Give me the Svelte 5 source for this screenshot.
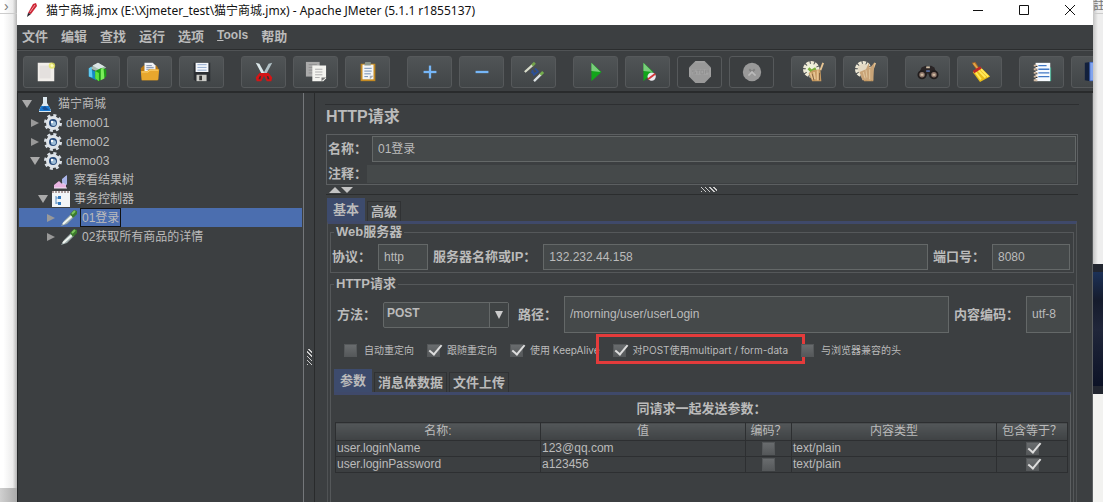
<script lang="ts">
  interface TreeNode {
    label: string;
    icon: string;
    level: number;
    arrow?: 'open' | 'closed';
  }

  const menus = ['文件', '编辑', '查找', '运行', '选项', 'Tools', '帮助'];

  const toolGroups = [
    ['new', 'templates', 'open', 'save'],
    ['cut', 'copy', 'paste'],
    ['expand', 'collapse', 'toggle'],
    ['start', 'start-no-pauses', 'stop', 'shutdown'],
    ['clear', 'clear-all'],
    ['search', 'search-reset'],
    ['function-helper', 'help'],
  ];

  const disabledTools = ['stop', 'shutdown'];

  const nodes: TreeNode[] = [
    { label: '猫宁商城', icon: 'flask', level: 0, arrow: 'open' },
    { label: 'demo01', icon: 'gear', level: 1, arrow: 'closed' },
    { label: 'demo02', icon: 'gear', level: 1, arrow: 'closed' },
    { label: 'demo03', icon: 'gear', level: 1, arrow: 'open' },
    { label: '察看结果树', icon: 'listener', level: 2 },
    { label: '事务控制器', icon: 'controller', level: 2, arrow: 'open' },
    { label: '01登录', icon: 'sampler', level: 3, arrow: 'closed' },
    { label: '02获取所有商品的详情', icon: 'sampler', level: 3, arrow: 'closed' },
  ];

  let selected = $state('01登录');

  let options = $state([
    { label: '自动重定向', checked: false, marked: false },
    { label: '跟随重定向', checked: true, marked: false },
    { label: '使用 KeepAlive', checked: true, marked: false },
    { label: '对POST使用multipart / form-data', checked: true, marked: true },
    { label: '与浏览器兼容的头', checked: false, marked: false },
  ]);

  let params = $state([
    { name: 'user.loginName', value: '123@qq.com', encode: false, type: 'text/plain', equals: true },
    { name: 'user.loginPassword', value: 'a123456', encode: false, type: 'text/plain', equals: true },
  ]);
</script>

{#snippet toolIcon(name: string)}
  <svg class="tool-icon" viewBox="0 0 24 24" aria-hidden="true">
    {#if name === 'new'}
      <path d="M3 2h15l3 3v17H3z" fill="#f1eeea" />
      <path d="M5 5h12v14H5z" fill="#e4e0de" />
      <circle cx="18.500" cy="5" r="3.500" fill="#e9e75e" opacity=".8" />
      <circle cx="18.500" cy="5" r="1.500" fill="#fffcc0" />
    {:else if name === 'templates'}
      <path d="M3 8l9-6 9 5-8 5z" fill="#a9bdb3" />
      <path d="M6 5l6-3 7 4-6 3z" fill="#dbe5e5" />
      <path d="M2 8l8 4v9l-8-4z" fill="#158ac2" />
      <path d="M2 8l3-2 1 12-4-1z" fill="#5fc9ef" />
      <path d="M9 11l6-3 6 1v8l-8 5-4-3z" fill="#1d9d17" />
      <path d="M9 11l4 2v9l-4-3z" fill="#5de23f" />
      <path d="M15 9l3-2 1 12-4 2z" fill="#7bee5b" />
    {:else if name === 'open'}
      <path d="M2 8l3-3h14l2 3v13H3z" fill="#b87712" />
      <path d="M6 2h9l3 3v9H6z" fill="#f1f3f7" />
      <path d="M8 5h6M8 7h8M8 9h8" stroke="#7d8da8" />
      <path d="M2 11h7l2-2h11l-1 11-1 1H3z" fill="#e8a72d" />
      <path d="M3 12h7l2-2h9" stroke="#ffd77c" fill="none" />
    {:else if name === 'save'}
      <path d="M3 2h18v20H5l-2-2z" fill="#2b2e33" />
      <path d="M5 2h14v10H5z" fill="#f4f7fb" />
      <path d="M7 4h10M7 7h10M7 10h10" stroke="#8ba4ca" />
      <path d="M6 15h11v7H6z" fill="#cbcbc7" />
      <path d="M9 16h3v5H9z" fill="#353535" />
    {:else if name === 'cut'}
      <path d="M3 2l4 1 6 11-3 1z" fill="#dce8ea" />
      <path d="M21 2l-4 1-6 11 3 1z" fill="#b1c1c6" />
      <path d="M12 13l-5 0-4 5 1 4h5l3-6 3 6h5l1-4-4-5z" fill="#d41516" />
      <path d="M6 20l1-3 2-1-1 4zM18 20l-1-3-2-1 1 4z" fill="#402d30" />
    {:else if name === 'copy'}
      <path d="M1 1h15v16H1z" fill="#aaa" />
      <path d="M4 4h9M4 7h6M4 10h5M4 13h5" stroke="#8d8d8d" />
      <path d="M8 5h15v14l-3 3H8z" fill="#f3f3ef" />
      <path d="M11 9h8M11 12h8M11 15h8M11 18h5" stroke="#aaa" />
      <path d="M18 22v-4h5z" fill="#777" />
    {:else if name === 'paste'}
      <path d="M4 3h16v19H4z" fill="#c48a22" />
      <path d="M6 4h12v16H6z" fill="#f4f6f7" />
      <path d="M9 1h6v4H8z" fill="#8c968b" />
      <path d="M8 8h8M8 11h8M8 14h7M8 17h4" stroke="#6986ad" />
      <path d="M14 20v-4h4z" fill="#9fa9b8" />
    {:else if name === 'expand' || name === 'collapse'}
      <path d="M5 12h14" stroke="#76b6f7" stroke-width="2.500" />
      {#if name === 'expand'}
        <path d="M12 5v14" stroke="#76b6f7" stroke-width="2.500" />
      {/if}
    {:else if name === 'toggle'}
      <path d="M2 12l9-8" stroke="#d9ddcb" stroke-width="2.500" />
      <path d="M10 5l3-3" stroke="#73a34a" stroke-width="3" />
      <path d="M12 22l8-8" stroke="#dce2e4" stroke-width="2.500" />
      <path d="M19 15l3-3" stroke="#74ad4e" stroke-width="3" />
      <path d="M10 10l2 5 5-4M13 8l3 3M9 12l4 2" stroke="#2c4f96" stroke-width="2" fill="none" />
    {:else if name === 'start' || name === 'start-no-pauses'}
      <path d="M7 2l11 10L7 22z" fill="#12a51b" />
      <path d="M7 2l10 10-10-1z" fill="#79cd7b" />
      {#if name === 'start-no-pauses'}
        <circle cx="16" cy="17" r="4.500" fill="#ecebf0" />
        <path d="M12 20l8-6" stroke="#d33839" stroke-width="2" />
      {/if}
    {:else if name === 'stop'}
      <path d="M7 0h10l7 7v10l-7 7H7l-7-7V7z" fill="#999" />
      <path d="M7 1h10M1 8v8M23 8v8" stroke="#a8a8a8" />
      <path d="M3 9h18v6H3z" fill="#a3a3a3" />
      <path d="M7 10H4v2h3v2H4M8 10h4M10 10v4M13 10h3v4h-3zM18 14v-4h3v2h-3" stroke="#8f8f8f" fill="none" />
    {:else if name === 'shutdown'}
      <circle cx="12" cy="12" r="10" fill="#999" />
      <path d="M8 16l4-4 4 4M9 9l6 6M15 9l-3 3" stroke="#808080" stroke-width="2" fill="none" />
      <path d="M8 16l4-4 4 4" stroke="#bbb" stroke-width="2" fill="none" />
    {:else if name === 'clear' || name === 'clear-all'}
      <circle cx="9" cy="9" r="7" fill="none" stroke="#ede8d5" stroke-width="4" stroke-dasharray="3.500 1" />
      <circle cx="9" cy="9" r="6" fill={name === 'clear' ? '#eef0dc' : '#e4dac5'} />
      {#if name === 'clear'}
        <path d="M6 8l3 3 5-3" stroke="#7cae3c" stroke-width="3" fill="none" />
      {/if}
      <path d="M6 13l5-3 8-1 1 13H10z" fill="#c69a61" />
      <path d="M19 10l3-8M12 12l1 8M16 10v11M8 13l3 7" stroke="#e6c493" stroke-width="2" />
      <path d="M18 13v8M10 14l2 7" stroke="#80603d" />
      {#if name === 'clear-all'}
        <path d="M5 12l7-3 3-7 1 6 5-6-1 19H8z" fill="#c9a478" />
        <path d="M12 10l1 8M16 9v11M9 12l2 7" stroke="#e3c9a2" />
      {/if}
    {:else if name === 'search'}
      <path d="M5 7l5-2 2 3 3-3 4 2 3 9-8 2-2-5-3 5-8-2z" fill="#2a2526" />
      <circle cx="5.500" cy="15" r="4" fill="#8c7469" stroke="#211d1d" stroke-width="2" />
      <circle cx="18.500" cy="15" r="4" fill="#8c7469" stroke="#211d1d" stroke-width="2" />
      <path d="M4 15h3M17 15h3M10 7h4" stroke="#d0bda4" stroke-width="2" />
      <path d="M10 11h4" stroke="#526595" stroke-width="2" />
    {:else if name === 'search-reset'}
      <path d="M3 2l4-1 5 8-3 2z" fill="#aa6926" />
      <path d="M4 3l2-1 5 7-1 1z" fill="#e1a747" />
      <path d="M4 12l9-5 10 10-11 6z" fill="#e9bd19" />
      <path d="M7 12l6 8M10 10l8 8M13 9l8 8" stroke="#ffe95b" stroke-width="2" />
      <path d="M5 12l8-5" stroke="#bd2829" stroke-width="3" />
    {:else if name === 'function-helper'}
      <path d="M19 7h3v15h-3z" fill="#2d9f7e" />
      <path d="M5 2h16v20H5z" fill="#f7fbff" />
      <path d="M8 5h9M8 9h12M8 13h12M8 17h12" stroke="#4178c5" stroke-width="1.500" />
      <path d="M3 5h4M3 9h4M3 13h4M3 17h4M3 21h4" stroke="#d3bca5" stroke-width="2" />
      <path d="M5 6h2M5 10h2M5 14h2M5 18h2" stroke="#222" />
    {:else if name === 'help'}
      <path d="M2 2l6-1v21l-6-1z" fill="#12203c" />
      <path d="M7 1h14v21H7z" fill="#4a70c9" />
      <path d="M8 2h3v19H8z" fill="#83a5ee" />
    {/if}
  </svg>
{/snippet}

{#snippet treeIcon(name: string)}
  <svg class="tree-icon" viewBox="0 0 18 18" aria-hidden="true">
    {#if name === 'flask'}
      <path d="M7 2h4v6l4 7v2H3v-2l4-7z" fill="#dce8ef" />
      <path d="M5 11h8l2 5H3z" fill="#1978ce" />
      <path d="M6 13l3-2 4 4H8z" fill="#154f97" />
    {:else if name === 'gear'}
      <circle cx="9" cy="9" r="7.500" fill="none" stroke="#d9dfe5" stroke-width="3" stroke-dasharray="3 2.900" />
      <circle cx="9" cy="9" r="7" fill="#dfe4e9" />
      <circle cx="9" cy="9" r="4" fill="#294c7d" />
      <circle cx="9.500" cy="9.500" r="2.500" fill="#9dbdd8" />
      <circle cx="8" cy="8" r="1.200" fill="#fff" />
    {:else if name === 'listener'}
      <path d="M3 17v-3l4-3 3 2 1-5 3-3v12z" fill="#d9cdf2" />
      <path d="M2 17v-3l5-4 3 3 4 1v3z" fill="#e9b4e2" />
      <path d="M10 8l5-4v10l-5-3z" fill="#a9b4e8" />
      <path d="M2 17h13" stroke="#f4e9f8" />
    {:else if name === 'controller'}
      <path d="M0 1h18v16H0z" fill="#f2f5f7" />
      <path d="M0 2h18" stroke="#ac9e9d" stroke-width="2" stroke-dasharray="2 1" />
      <path d="M4 6v8M4 8h3M4 13h3" stroke="#578dc1" />
      <path d="M6 6h3v3H6zM6 12h3v3H6z" fill="#3378bc" />
    {:else if name === 'sampler'}
      <path d="M1 17l3-5 7-7 3 3-7 7z" fill="#9cabab" />
      <path d="M3 15l9-8" stroke="#f1f6f1" stroke-width="2" />
      <path d="M10 5l4-4 3 1v3l-4 4z" fill="#3b7b2d" />
      <path d="M12 5l3-3" stroke="#7dc45d" stroke-width="2" />
    {/if}
  </svg>
{/snippet}

<div class="desktop">
  <aside class="behind behind-left">
    <div class="behind-top">›</div>
    <div class="behind-foot"></div>
  </aside>

  <div class="window">
    <header class="titlebar">
      <svg class="app-icon" viewBox="0 0 16 16" aria-hidden="true">
        <path d="M4 11l5-9 3-1 1 3-6 8z" fill="#cd2535" />
        <path d="M6 10l5-7" stroke="#f39aa0" />
        <path d="M4 11l3 1-4 3z" fill="#252029" />
      </svg>
      <span class="window-title">猫宁商城.jmx (E:\Xjmeter_test\猫宁商城.jmx) - Apache JMeter (5.1.1 r1855137)</span>
      <div class="window-buttons">
        <button type="button" aria-label="Minimize">
          <svg viewBox="0 0 12 12"><path d="M1 6.500h10" /></svg>
        </button>
        <button type="button" aria-label="Maximize">
          <svg viewBox="0 0 12 12"><path d="M1.500 1.500h9v9h-9z" /></svg>
        </button>
        <button type="button" aria-label="Close">
          <svg viewBox="0 0 12 12"><path d="M1 1l10 10M11 1L1 11" /></svg>
        </button>
      </div>
    </header>

    <nav class="menubar">
      {#each menus as menu (menu)}
        <button type="button" class:latin={menu === 'Tools'}>
          {#if menu === 'Tools'}<u>T</u>ools{:else}{menu}{/if}
        </button>
      {/each}
    </nav>

    <div class="toolbar">
      {#each toolGroups as group, i (i)}
        <div class="tool-group">
          {#each group as tool (tool)}
            <button type="button" aria-label={tool} disabled={disabledTools.includes(tool)}>
              {@render toolIcon(tool)}
            </button>
          {/each}
        </div>
      {/each}
    </div>

    <div class="workspace">
      <div class="tree">
        {#each nodes as node (node.label)}
          <button
            type="button"
            class="node level-{node.level}"
            class:selected={selected === node.label}
            onclick={() => (selected = node.label)}
          >
            <span class="arrow {node.arrow ?? ''}"></span>
            {@render treeIcon(node.icon)}
            <span class="node-label">{node.label}</span>
          </button>
        {/each}
      </div>

      <div class="divider"><span class="grip grip-vertical"></span></div>

      <main class="editor">
        <h1>HTTP请求</h1>

        <div class="identity">
          <label for="name">名称：</label>
          <input id="name" value="01登录" />
          <label for="comment">注释：</label>
          <input id="comment" class="flat" value="" />
        </div>

        <div class="splitter">
          <span class="up"></span><span class="down"></span>
          <span class="grip grip-horizontal"></span>
        </div>

        <div class="tabs">
          <button type="button" class="active">基本</button>
          <button type="button">高级</button>
        </div>

        <section class="basic">
          <fieldset>
            <legend>Web服务器</legend>
            <div class="row">
              <label for="protocol">协议：</label>
              <input id="protocol" class="short" value="http" />
              <label for="server">服务器名称或IP：</label>
              <input id="server" class="grow" value="132.232.44.158" />
              <label for="port">端口号：</label>
              <input id="port" class="port" value="8080" />
            </div>
          </fieldset>

          <fieldset class="request">
            <legend>HTTP请求</legend>
            <div class="row request-row">
              <label for="method">方法：</label>
              <div class="select">
                <select id="method">
                  <option>POST</option>
                  <option>GET</option>
                </select>
                <span class="caret"></span>
              </div>
              <label for="path">路径：</label>
              <input id="path" class="grow tall" value="/morning/user/userLogin" />
              <label for="encoding">内容编码：</label>
              <input id="encoding" class="encoding tall" value="utf-8" />
            </div>

            <div class="options">
              {#each options as option (option.label)}
                <label class:marked={option.marked}>
                  <input type="checkbox" bind:checked={option.checked} />
                  {option.label}
                </label>
              {/each}
            </div>

            <div class="tabs param-tabs">
              <button type="button" class="active">参数</button>
              <button type="button">消息体数据</button>
              <button type="button">文件上传</button>
            </div>

            <div class="params">
              <h2>同请求一起发送参数：</h2>
              <table>
                <colgroup>
                  <col />
                  <col />
                  <col class="col-encode" />
                  <col />
                  <col class="col-equals" />
                </colgroup>
                <thead>
                  <tr>
                    <th>名称:</th>
                    <th>值</th>
                    <th>编码？</th>
                    <th>内容类型</th>
                    <th>包含等于？</th>
                  </tr>
                </thead>
                <tbody>
                  {#each params as param (param.name)}
                    <tr>
                      <td>{param.name}</td>
                      <td>{param.value}</td>
                      <td class="tick"><input type="checkbox" aria-label="编码" bind:checked={param.encode} /></td>
                      <td>{param.type}</td>
                      <td class="tick"><input type="checkbox" aria-label="包含等于" bind:checked={param.equals} /></td>
                    </tr>
                  {/each}
                </tbody>
              </table>
            </div>
          </fieldset>
        </section>
      </main>
    </div>
  </div>

  <aside class="behind behind-right">
    <div class="behind-top">註</div>
    <div class="wallpaper"></div>
    <div class="behind-rest"></div>
  </aside>
</div>

<style>
  :global(body) {
    margin: 0;
  }

  .desktop {
    display: flex;
    min-height: 100vh;
    overflow: hidden;
    background: #fff;
    font-family: 'Liberation Sans', 'Noto Sans CJK SC', sans-serif;
    font-size: 12px;
    color: #bbb;
  }

  .desktop * {
    box-sizing: border-box;
  }

  button,
  input,
  select {
    font: inherit;
    color: inherit;
    margin: 0;
  }

  button {
    border: 0;
    padding: 0;
    background: none;
  }

  .behind {
    display: flex;
    flex-direction: column;
    flex-shrink: 0;
    overflow: hidden;
  }

  .behind-left {
    width: 17px;
    background: linear-gradient(to right, #fff 20%, #ececec 75%, #b5b5b5);
  }

  .behind-top {
    height: 14px;
    border-bottom: 1px solid #ccc;
    line-height: 12px;
    color: #777;
  }

  .behind-left .behind-top {
    padding-left: 4px;
    font-size: 14px;
  }

  .behind-foot {
    height: 17px;
    margin-top: auto;
    background: linear-gradient(to right, #d0d0d0, #aaa);
  }

  .behind-right {
    width: 10px;
    background: linear-gradient(to right, #c4c4c4, #eee 50%);
  }

  .wallpaper {
    height: 130px;
    margin-top: 250px;
    border: solid #222630;
    border-width: 8px 0;
    background: linear-gradient(#1c3157, #151b2c 25%, #20263a 50%, #0c1226);
  }

  .behind-rest {
    flex: 1;
    background: #f2f2f0;
  }

  .window {
    display: flex;
    flex-direction: column;
    flex: 1;
    min-width: 0;
    background: #3c3f41;
  }

  .titlebar {
    display: flex;
    align-items: center;
    height: 25px;
    padding: 0 0 6px 7px;
    background: #fff;
    color: #111;
  }

  .app-icon {
    width: 16px;
    height: 16px;
    margin-right: 6px;
  }

  .window-title {
    flex: 1;
    font-family: 'Noto Sans', 'Noto Sans CJK SC', sans-serif;
    white-space: nowrap;
  }

  .window-buttons {
    display: flex;
  }

  .window-buttons button {
    display: grid;
    place-items: center;
    width: 46px;
    height: 18px;
  }

  .window-buttons svg {
    width: 12px;
    height: 12px;
    fill: none;
    stroke: #111;
  }

  .menubar {
    display: flex;
    gap: 13px;
    height: 25px;
    padding: 0 5px 4px;
    border-bottom: 1px solid #2b2d2e;
    font-size: 13px;
    font-weight: 700;
  }

  .menubar .latin {
    font-size: 12px;
  }

  .toolbar {
    display: flex;
    gap: 17px;
    height: 43px;
    padding: 5px 6px;
    border-top: 1px solid #505355;
    border-bottom: 2px solid #292b2c;
    overflow: hidden;
  }

  .tool-group {
    display: flex;
    flex-shrink: 0;
    gap: 7px;
  }

  .tool-group button {
    display: grid;
    place-items: center;
    width: 45px;
    height: 32px;
    border: 1px solid #56595b;
    border-radius: 3px;
    background: linear-gradient(#505456, #414547);
  }

  .tool-group button:disabled {
    background: #3b3e40;
  }

  .tool-icon {
    width: 22px;
    height: 22px;
  }

  .workspace {
    display: flex;
    flex: 1;
  }

  .tree {
    width: 287px;
    flex-shrink: 0;
    padding: 1px 1px 0;
    border-left: 1px solid #25282a;
    border-right: 1px solid #74777a;
  }

  .node {
    display: flex;
    align-items: center;
    width: 100%;
    height: 19px;
    line-height: 17px;
    white-space: nowrap;
  }

  .level-0 {
    padding-left: 2px;
  }

  .level-1 {
    padding-left: 10px;
  }

  .level-2 {
    padding-left: 18px;
  }

  .level-3 {
    padding-left: 26px;
  }

  .node.selected {
    background: #4b6eaf;
  }

  .arrow {
    display: grid;
    place-items: center;
    width: 12px;
    margin-right: 3px;
  }

  .arrow.open::before {
    content: '';
    border: solid transparent;
    border-width: 8px 5px 0;
    border-top-color: #aaa;
  }

  .arrow.closed::before {
    content: '';
    border: solid transparent;
    border-width: 4px 0 4px 8px;
    border-left-color: #999;
  }

  .tree-icon {
    width: 18px;
    height: 18px;
  }

  .node-label {
    height: 19px;
    margin-left: 2px;
    padding: 1px 1px 0;
    border: 1px solid transparent;
  }

  .selected .node-label {
    border-color: #111;
  }

  .divider {
    display: grid;
    place-items: center;
    width: 11px;
    flex-shrink: 0;
    padding-top: 115px;
    border-right: 1px solid #292b2c;
  }

  .grip {
    background: repeating-linear-gradient(45deg, #ccc 0 1px, #3c3f41 1px 3px);
  }

  .grip-vertical {
    width: 5px;
    height: 16px;
  }

  .grip-horizontal {
    width: 16px;
    height: 5px;
    margin: 0 auto;
  }

  .editor {
    flex: 1;
    min-width: 0;
    padding: 11px 13px 0 10px;
    border-right: 1px solid #5c5f61;
  }

  h1 {
    margin: 0 0 4px;
    padding: 0 1px;
    height: 26px;
    border-top: 1px solid #2d2f31;
    font-size: 16px;
    font-weight: 700;
    line-height: 23px;
  }

  .identity {
    display: grid;
    grid-template-columns: auto 1fr;
    align-items: center;
    row-gap: 3px;
    margin: 0 1px;
    padding: 1px;
    border: 1px solid #5c5f61;
  }

  label {
    font-size: 13px;
    font-weight: 700;
    line-height: 18px;
    white-space: nowrap;
  }

  input,
  select {
    height: 26px;
    min-width: 0;
    padding: 0 5px 1px;
    border: 1px solid #646868;
    border-radius: 0;
    outline: 0;
    background: #45494a;
  }

  .identity input {
    margin-left: 5px;
    padding-bottom: 3px;
  }

  .identity .flat {
    height: 18px;
    margin-left: 0;
    border: 0;
  }

  .splitter {
    display: flex;
    align-items: center;
    height: 10px;
    margin: 0 1px 3px;
    padding: 0 14px 0 3px;
    border-bottom: 1px solid #2b2d2e;
  }

  .up,
  .down {
    border: solid transparent;
    border-width: 0 6px 6px;
    border-bottom-color: #c4c4c4;
  }

  .down {
    border-width: 6px 6px 0;
    border-top-color: #c4c4c4;
  }

  .tabs {
    display: flex;
    align-items: flex-end;
    gap: 2px;
    margin-left: 2px;
    font-size: 13px;
    font-weight: 700;
  }

  .tabs button {
    height: 20px;
    padding: 0 3px;
    border: 1px solid #303234;
    border-bottom: 0;
    line-height: 18px;
  }

  .tabs .active {
    height: 23px;
    padding: 0 5px;
    border-color: #3d4b6d;
    background: #3d4b6d;
  }

  .basic {
    margin: 0 2px;
    padding: 0 2px;
    border: 1px solid #505355;
    border-top: 3px solid #3f496a;
    border-bottom: 0;
  }

  fieldset {
    min-width: 0;
    margin: 0 0 3px;
    padding: 4px 3px 2px 1px;
    border: 1px solid #55585a;
  }

  fieldset.request {
    margin: 0;
    padding: 4px 2px 2px 3px;
    border-bottom: 0;
  }

  legend {
    height: 16px;
    margin-left: 2px;
    padding: 0 2px;
    font-size: 13px;
    font-weight: 700;
    line-height: 16px;
  }

  .request legend {
    margin-left: 0;
  }

  .row {
    display: flex;
    align-items: center;
    gap: 5px;
  }

  .row label {
    margin-right: 2px;
  }

  .request-row {
    padding-left: 3px;
  }

  .grow {
    flex: 1;
  }

  .short {
    width: 50px;
  }

  .port {
    width: 78px;
  }

  .encoding {
    width: 45px;
  }

  .tall {
    height: 37px;
    padding-bottom: 2px;
  }

  .select {
    position: relative;
    width: 126px;
    margin-right: 4px;
  }

  select {
    width: 100%;
    padding: 0 3px 3px;
    appearance: none;
    border-radius: 2px;
    font-weight: 700;
  }

  .caret {
    position: absolute;
    inset: 1px 1px 1px auto;
    display: grid;
    place-items: center;
    width: 19px;
    border-left: 1px solid #646868;
    background: #3f4344;
    pointer-events: none;
  }

  .caret::before {
    content: '';
    border: solid transparent;
    border-width: 8px 4px 0;
    border-top-color: #ccc;
  }

  .options {
    display: flex;
    gap: 13px;
    margin: 10px 0 12px 10px;
  }

  .options label {
    position: relative;
    display: flex;
    align-items: center;
    gap: 7px;
    height: 14px;
    font-family: Inter, 'Noto Sans CJK SC', sans-serif;
    font-size: 10px;
    font-weight: 400;
  }

  .marked::after {
    content: '';
    position: absolute;
    inset: -9px -17px -7px;
    border: 3px solid #e43b3b;
  }

  input[type='checkbox'] {
    position: relative;
    flex-shrink: 0;
    width: 13px;
    height: 13px;
    padding: 0;
    appearance: none;
    border: 1px solid #55585a;
    background: linear-gradient(#696c6e, #56595b);
  }

  input[type='checkbox']:checked::after {
    content: '';
    position: absolute;
    left: 4px;
    top: -3px;
    width: 5px;
    height: 11px;
    border: solid #ddd;
    border-width: 0 2px 2px 0;
    transform: rotate(40deg);
  }

  .param-tabs {
    margin-left: 0;
  }

  .params {
    padding: 0 2px 30px 1px;
    border-top: 3px solid #3f496a;
    border-right: 1px solid #5c5f61;
  }

  h2 {
    margin: 0;
    font-size: 13px;
    font-weight: 700;
    line-height: 27px;
    text-align: center;
  }

  table {
    width: 100%;
    table-layout: fixed;
    border-collapse: collapse;
    line-height: 15px;
  }

  .col-encode {
    width: 46px;
  }

  .col-equals {
    width: 71px;
  }

  th,
  td {
    height: 16px;
    padding: 0 1px;
    border: 1px solid #2d2f31;
    text-align: left;
    white-space: nowrap;
  }

  th {
    height: 18px;
    padding: 0;
    background: linear-gradient(#535759, #3f4244);
    font-weight: 400;
    text-align: center;
  }

  .tick {
    text-align: center;
    line-height: 0;
  }
</style>
